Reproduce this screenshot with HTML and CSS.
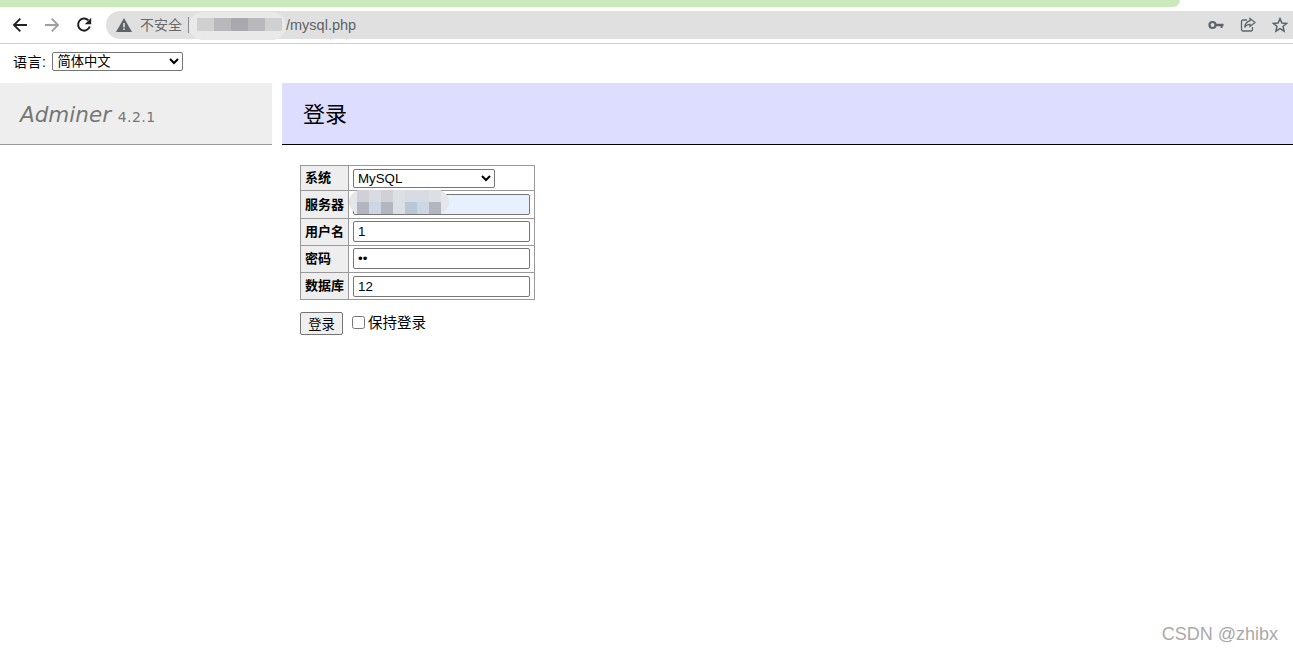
FILE: index.html
```html
<!DOCTYPE html>
<html lang="zh-CN">
<head>
<meta charset="UTF-8">
<meta name="viewport" content="width=device-width, initial-scale=1.0">
<title>登录 - Adminer</title>
<link rel="stylesheet" href="styles.css">
</head>
<body>

<div class="tab-strip"></div>

<div class="toolbar">
    <svg class="nav-icon" viewBox="0 0 16 16"><path d="M15 8H2.500M8.300 1.700 2 8l6.300 6.300" fill="none" stroke="#202124" stroke-width="1.900"/></svg>
    <svg class="nav-icon" viewBox="0 0 16 16"><path d="M1 8h12.500M7.700 1.700 14 8l-6.300 6.300" fill="none" stroke="#a0a0a0" stroke-width="1.900"/></svg>
    <svg class="nav-icon" viewBox="0 0 16 16"><path d="M13.800 9.500A6 6 0 1 1 12.400 3.400" fill="none" stroke="#202124" stroke-width="2"/><path d="M15.200 .8v6.400H8.800z" fill="#202124"/></svg>
    <div class="address-bar">
        <svg class="warn-icon" viewBox="0 0 16 14"><path d="M8 0 16 14H0z" fill="#5f6368"/><path d="M7.200 5h1.600v4.400H7.200zM7.200 10.400h1.600V12H7.200z" fill="#e0e0e0"/></svg>
        <span class="not-secure">不安全</span>
        <span class="divider"></span>
        <span class="url">
            <span class="url-blur">
                <i class="p1"></i><i class="p2"></i><i class="p3"></i><i class="p2"></i><i class="p1"></i>
            </span>/mysql.php
        </span>
        <div class="address-actions">
            <svg class="action-icon" viewBox="0 0 16 16"><circle cx="4.500" cy="8" r="3" fill="none" stroke="#5f6368" stroke-width="2.200"/><path d="M7.500 6.800h8v2.400h-1v1.800h-2V9.200H7.500z" fill="#5f6368"/></svg>
            <svg class="action-icon" viewBox="0 0 16 16"><path d="M7 3H3a1.500 1.500 0 0 0-1.500 1.500v8A1.500 1.500 0 0 0 3 14h8a1.500 1.500 0 0 0 1.500-1.500V10" fill="none" stroke="#5f6368" stroke-width="1.300"/><path d="M10 1.500 15 5.500 10 9.500V7.300C7.500 7.300 5.800 8.300 4.700 10.500 5 7 7 4.300 10 3.800z" fill="none" stroke="#5f6368" stroke-width="1.300"/></svg>
            <svg class="action-icon" viewBox="0 0 16 16"><path d="M8 1.600 9.900 6l4.700.4-3.600 3.100 1.100 4.600L8 11.700l-4.100 2.400L5 9.500 1.400 6.400 6.100 6z" fill="none" stroke="#5f6368" stroke-width="1.500"/></svg>
        </div>
    </div>
</div>

<form class="lang-form">
    <label for="lang">语言:</label>
    <select id="lang" class="lang-select">
        <option>简体中文</option>
    </select>
</form>

<div class="page">
    <div class="menu">
        <h1><a href="#">Adminer</a> <span class="version">4.2.1</span></h1>
    </div>
    <div class="content">
        <h2>登录</h2>
        <form class="login-form">
            <table class="login-table">
                <tr>
                    <th>系统</th>
                    <td>
                        <select class="driver-select">
                            <option>MySQL</option>
                        </select>
                    </td>
                </tr>
                <tr class="server-row">
                    <th>服务器</th>
                    <td class="server-cell">
                        <input type="text" class="autofilled">
                        <div class="server-blur">
                            <i class="c1"></i><i class="c2"></i><i class="c1"></i><i class="c3"></i><i class="c2"></i><i class="c2"></i><i class="c3"></i>
                            <i class="c4"></i><i class="c5"></i><i class="c4"></i><i class="c3"></i><i class="c6"></i><i class="c5"></i><i class="c4"></i>
                        </div>
                    </td>
                </tr>
                <tr>
                    <th>用户名</th>
                    <td class="raised"><input type="text" value="1"></td>
                </tr>
                <tr>
                    <th>密码</th>
                    <td class="raised"><input type="password" value="12"></td>
                </tr>
                <tr>
                    <th>数据库</th>
                    <td><input type="text" value="12"></td>
                </tr>
            </table>
            <p class="actions">
                <button type="button" class="btn-login">登录</button>
                <label class="keep"><input type="checkbox">保持登录</label>
            </p>
        </form>
    </div>
</div>

<div class="watermark">CSDN @zhibx</div>

</body>
</html>
```

FILE: styles.css
```css
body {
    font-family: "Liberation Sans", "Noto Sans CJK SC", Arial, sans-serif;
    font-size: 13.3px;
    background-color: #fff;
    color: #000;
    margin: 0;
    padding: 0;
    overflow: hidden;
}

/* browser chrome */

.tab-strip {
    width: 1180px;
    height: 7px;
    background-color: #cbe9bd;
    border-bottom-right-radius: 7px;
}

.toolbar {
    display: flex;
    align-items: center;
    height: 36px;
    border-bottom: 1px solid #cfcfcf;
    padding-left: 12px;
}

.nav-icon {
    width: 16px;
    height: 16px;
    margin-right: 16px;
}

.nav-icon:nth-child(3) {
    margin-right: 14px;
}

.address-bar {
    flex: 1;
    display: flex;
    align-items: center;
    height: 28px;
    background-color: #e0e0e0;
    border-radius: 14px 0 0 14px;
    padding-left: 10px;
}

.warn-icon {
    width: 16px;
    height: 14px;
    margin-right: 8px;
}

.not-secure {
    color: #6a6a6a;
    font-size: 14px;
    margin-top: -2px;
}

.divider {
    width: 1px;
    height: 16px;
    background-color: #8a8a8a;
    margin-left: 6px;
}

.url {
    display: flex;
    align-items: center;
    color: #5f6368;
    font-family: "Liberation Sans", Arial, sans-serif;
    font-size: 14.5px;
}

.url-blur {
    display: flex;
    align-items: center;
    height: 28px;
    width: 97px;
    margin-top: 2px;
    background-color: #e9e9e9;
    border-radius: 14px;
    padding-left: 8px;
    box-sizing: border-box;
}

.url-blur i {
    display: block;
    width: 17px;
    height: 13px;
    margin-top: -3px;
}

.p1 { background-color: #d0d0d0; }
.p2 { background-color: #b9b9bc; }
.p3 { background-color: #a9a9ad; }

.address-actions {
    margin-left: auto;
    display: flex;
    align-items: center;
    gap: 16px;
    margin-right: 5px;
}

.action-icon {
    width: 16px;
    height: 16px;
}

/* adminer page */

.lang-form {
    display: flex;
    align-items: center;
    height: 34px;
    padding: 0 0 5px 13px;
    font-size: 13.3px;
}

.lang-form label {
    margin-right: 6px;
    font-size: 14px;
    letter-spacing: .5px;
}

.lang-select {
    width: 131px;
    height: 19px;
    font-size: 13.3px;
    font-family: inherit;
    background-color: #fff;
    padding: 0;
    border-radius: 2px;
}

.page {
    display: flex;
    gap: 10px;
}

.menu {
    width: 272px;
}

.menu h1 {
    margin: 0;
    height: 61px;
    line-height: 63px;
    padding-left: 20px;
    background-color: #eee;
    border-bottom: 1px solid #999;
    font-family: Verdana, "DejaVu Sans", sans-serif;
    font-size: 21.500px;
    font-weight: normal;
}

.menu h1 a {
    color: #777;
    font-style: italic;
    text-decoration: none;
}

.version {
    color: #777;
    font-size: 14px;
    letter-spacing: .4px;
}

.content {
    flex: 1;
}

.content h2 {
    margin: 0;
    height: 61px;
    line-height: 63px;
    padding-left: 21px;
    background-color: #ddf;
    border-bottom: 1px solid #000;
    font-size: 22px;
    font-weight: normal;
}

.login-form {
    padding: 20px 0 0 18px;
}

.login-table {
    border-collapse: collapse;
    border: 1px solid #999;
}

.login-table th,
.login-table td {
    border: 1px solid #999;
    padding: 0 4px;
}

.login-table th {
    background-color: #eee;
    font-weight: bold;
    text-align: left;
    width: 40px;
    padding: 0 3px 3px 4px;
    font-size: 13px;
}

.login-table td {
    height: 26px;
    width: 176px;
}

.login-table td.raised {
    padding-bottom: 2px;
    height: 24px;
}

.login-table tr:first-child td {
    height: 24px;
}

.login-table .server-row td {
    height: 27px;
}

.login-table input {
    display: block;
    box-sizing: border-box;
    width: 177px;
    height: 21px;
    margin: 0;
    padding: 1px 4px;
    font-family: inherit;
    font-size: 13.3px;
    border: 1px solid #767676;
    border-radius: 2px;
}

.login-table input.autofilled {
    background-color: #e8f0fe;
}

.driver-select {
    display: block;
    width: 142px;
    height: 19px;
    font-size: 13.3px;
    font-family: inherit;
    background-color: #fff;
    padding: 0;
    border-radius: 2px;
}

.server-cell {
    position: relative;
}

.server-blur {
    position: absolute;
    left: 0;
    top: -1px;
    display: grid;
    grid-template-columns: repeat(7, 12px);
    grid-auto-rows: 12px;
    padding-left: 8px;
    width: 92px;
    height: 24px;
    background-color: #e4e6ea;
    border-radius: 12px;
}

.server-blur i { display: block; }
.c1 { background-color: #cfd1d6; }
.c2 { background-color: #d8dce2; }
.c3 { background-color: #dcdfe4; }
.c4 { background-color: #b3b5c0; }
.c5 { background-color: #cdd7e3; }
.c6 { background-color: #b8c7d8; }

.actions {
    display: flex;
    align-items: center;
    margin: 12px 0 0;
}

.btn-login {
    width: 43px;
    height: 23px;
    padding: 0;
    font-family: inherit;
    font-size: 13.3px;
    background-color: #efefef;
    border: 1px solid #767676;
    border-radius: 2px;
}

.keep {
    display: flex;
    align-items: center;
    margin-left: 9px;
    font-size: 14.500px;
    line-height: 20px;
    padding-bottom: 2px;
}

.keep input {
    width: 13px;
    height: 13px;
    margin: 0 3px 0 0;
}

.watermark {
    position: absolute;
    right: 15px;
    bottom: 6px;
    color: #a9a9a9;
    font-size: 18px;
}
```
